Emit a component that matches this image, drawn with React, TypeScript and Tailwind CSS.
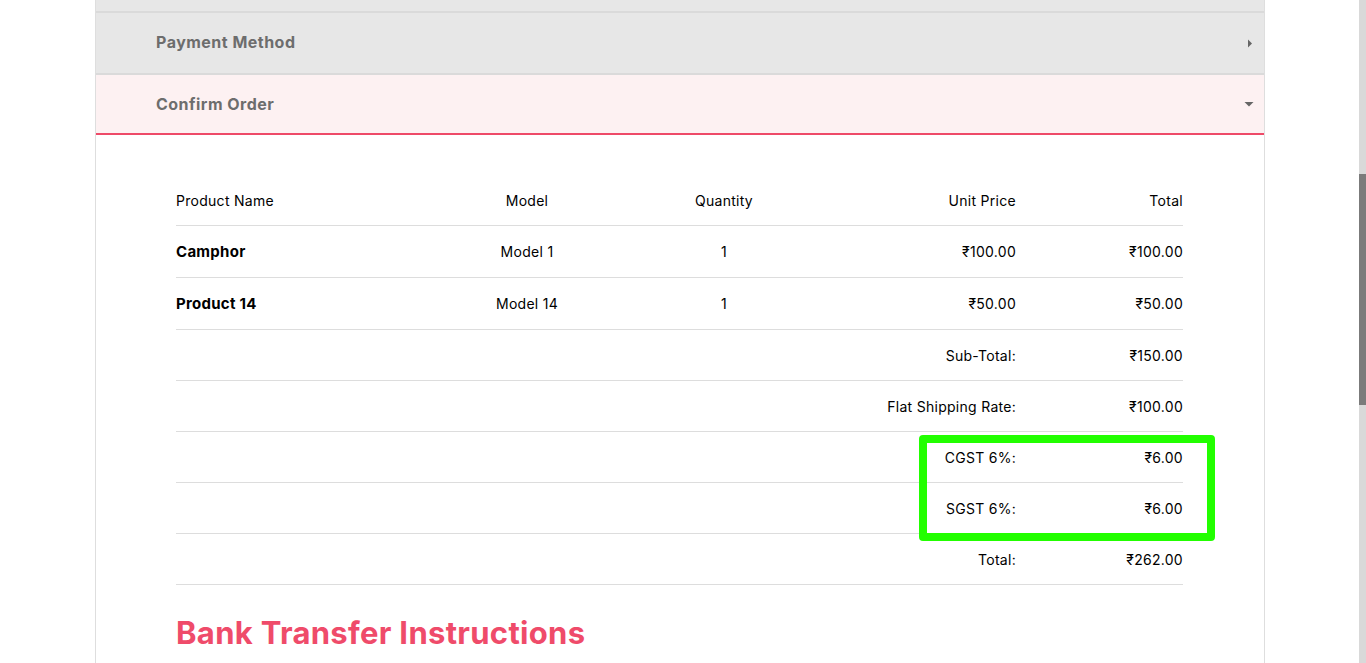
import React from 'react';

type Row = { cells: string[]; bold?: boolean; h: string };

const items: Row[] = [
  { cells: ['Camphor', 'Model 1', '1', '₹100.00', '₹100.00'], bold: true, h: 'h-[52px]' },
  { cells: ['Product 14', 'Model 14', '1', '₹50.00', '₹50.00'], bold: true, h: 'h-[52px]' },
];

const totals: [string, string][] = [
  ['Sub-Total:', '₹150.00'],
  ['Flat Shipping Rate:', '₹100.00'],
  ['CGST 6%:', '₹6.00'],
  ['SGST 6%:', '₹6.00'],
  ['Total:', '₹262.00'],
];

const grid = 'grid grid-cols-[252px_198px_196px_194px_167px] items-center';

function CaretRight() {
  return (
    <svg width="6" height="9" viewBox="0 0 6 9" className="text-[#666]">
      <path d="M1 0.5 L5 4.5 L1 8.5 Z" fill="currentColor" />
    </svg>
  );
}

function CaretDown() {
  return (
    <svg width="10" height="6" viewBox="0 0 10 6" className="text-[#666]">
      <path d="M0.5 1 L9.5 1 L5 5.5 Z" fill="currentColor" />
    </svg>
  );
}

export default function App() {
  return (
    <div
      className="relative h-[663px] w-[1366px] overflow-hidden bg-white text-black"
      style={{ fontFamily: 'Inter, "Noto Sans", sans-serif' }}
    >
      <div className="ml-[95px] w-[1170px] h-full border-x border-[#dedede]">
        {/* previous step, cut off */}
        <div className="h-[13px] bg-[#e7e7e7] border-b-2 border-[#dadada]" />

        <div className="h-[62px] bg-[#e7e7e7] border-b-2 border-[#dadada] flex items-center justify-between pl-[60px] pr-[11px]">
          <span className="text-[16px] font-bold text-[#6d6d6d] tracking-[0.03em] -mt-[2px]">Payment Method</span>
          <CaretRight />
        </div>

        <div className="h-[60px] bg-[#fdf1f2] border-b-2 border-[#ee4a68] flex items-center justify-between pl-[60px] pr-[10px]">
          <span className="text-[16px] font-bold text-[#6d6d6d] tracking-[0.03em]">Confirm Order</span>
          <CaretDown />
        </div>

        <div className="pl-[80px] pt-[40px]">
          <div className="w-[1007px] text-[14px] tracking-[0.02em]">
            <div className={`${grid} h-[51px] border-b border-[#dddddd]`}>
              <div>Product Name</div>
              <div className="text-center">Model</div>
              <div className="text-center">Quantity</div>
              <div className="text-right">Unit Price</div>
              <div className="text-right">Total</div>
            </div>

            {items.map((r) => (
              <div key={r.cells[0]} className={`${grid} ${r.h} border-b border-[#dddddd]`}>
                <div className="font-bold text-[15px] pt-[2px]">{r.cells[0]}</div>
                <div className="text-center">{r.cells[1]}</div>
                <div className="text-center">{r.cells[2]}</div>
                <div className="text-right">{r.cells[3]}</div>
                <div className="text-right">{r.cells[4]}</div>
              </div>
            ))}

            {totals.map(([label, value]) => (
              <div key={label} className={`${grid} h-[51px] border-b border-[#dddddd]`}>
                <div className="col-span-4 text-right">{label}</div>
                <div className="text-right">{value}</div>
              </div>
            ))}
          </div>

          <h2 className="mt-[32px] text-[31px] font-bold text-[#ef4b6a] tracking-[0.01em] leading-none">
            Bank Transfer Instructions
          </h2>
        </div>
      </div>

      {/* highlight annotation */}
      <div className="absolute left-[919px] top-[435px] w-[296px] h-[106px] border-[8px] border-[#22ff00] rounded-[4px]" />

      {/* scrollbar */}
      <div className="absolute right-0 top-0 w-[7px] h-full bg-[#d9d9d9]">
        <div className="mt-[174px] h-[231px] bg-[#7b7b7b]" />
      </div>
    </div>
  );
}
